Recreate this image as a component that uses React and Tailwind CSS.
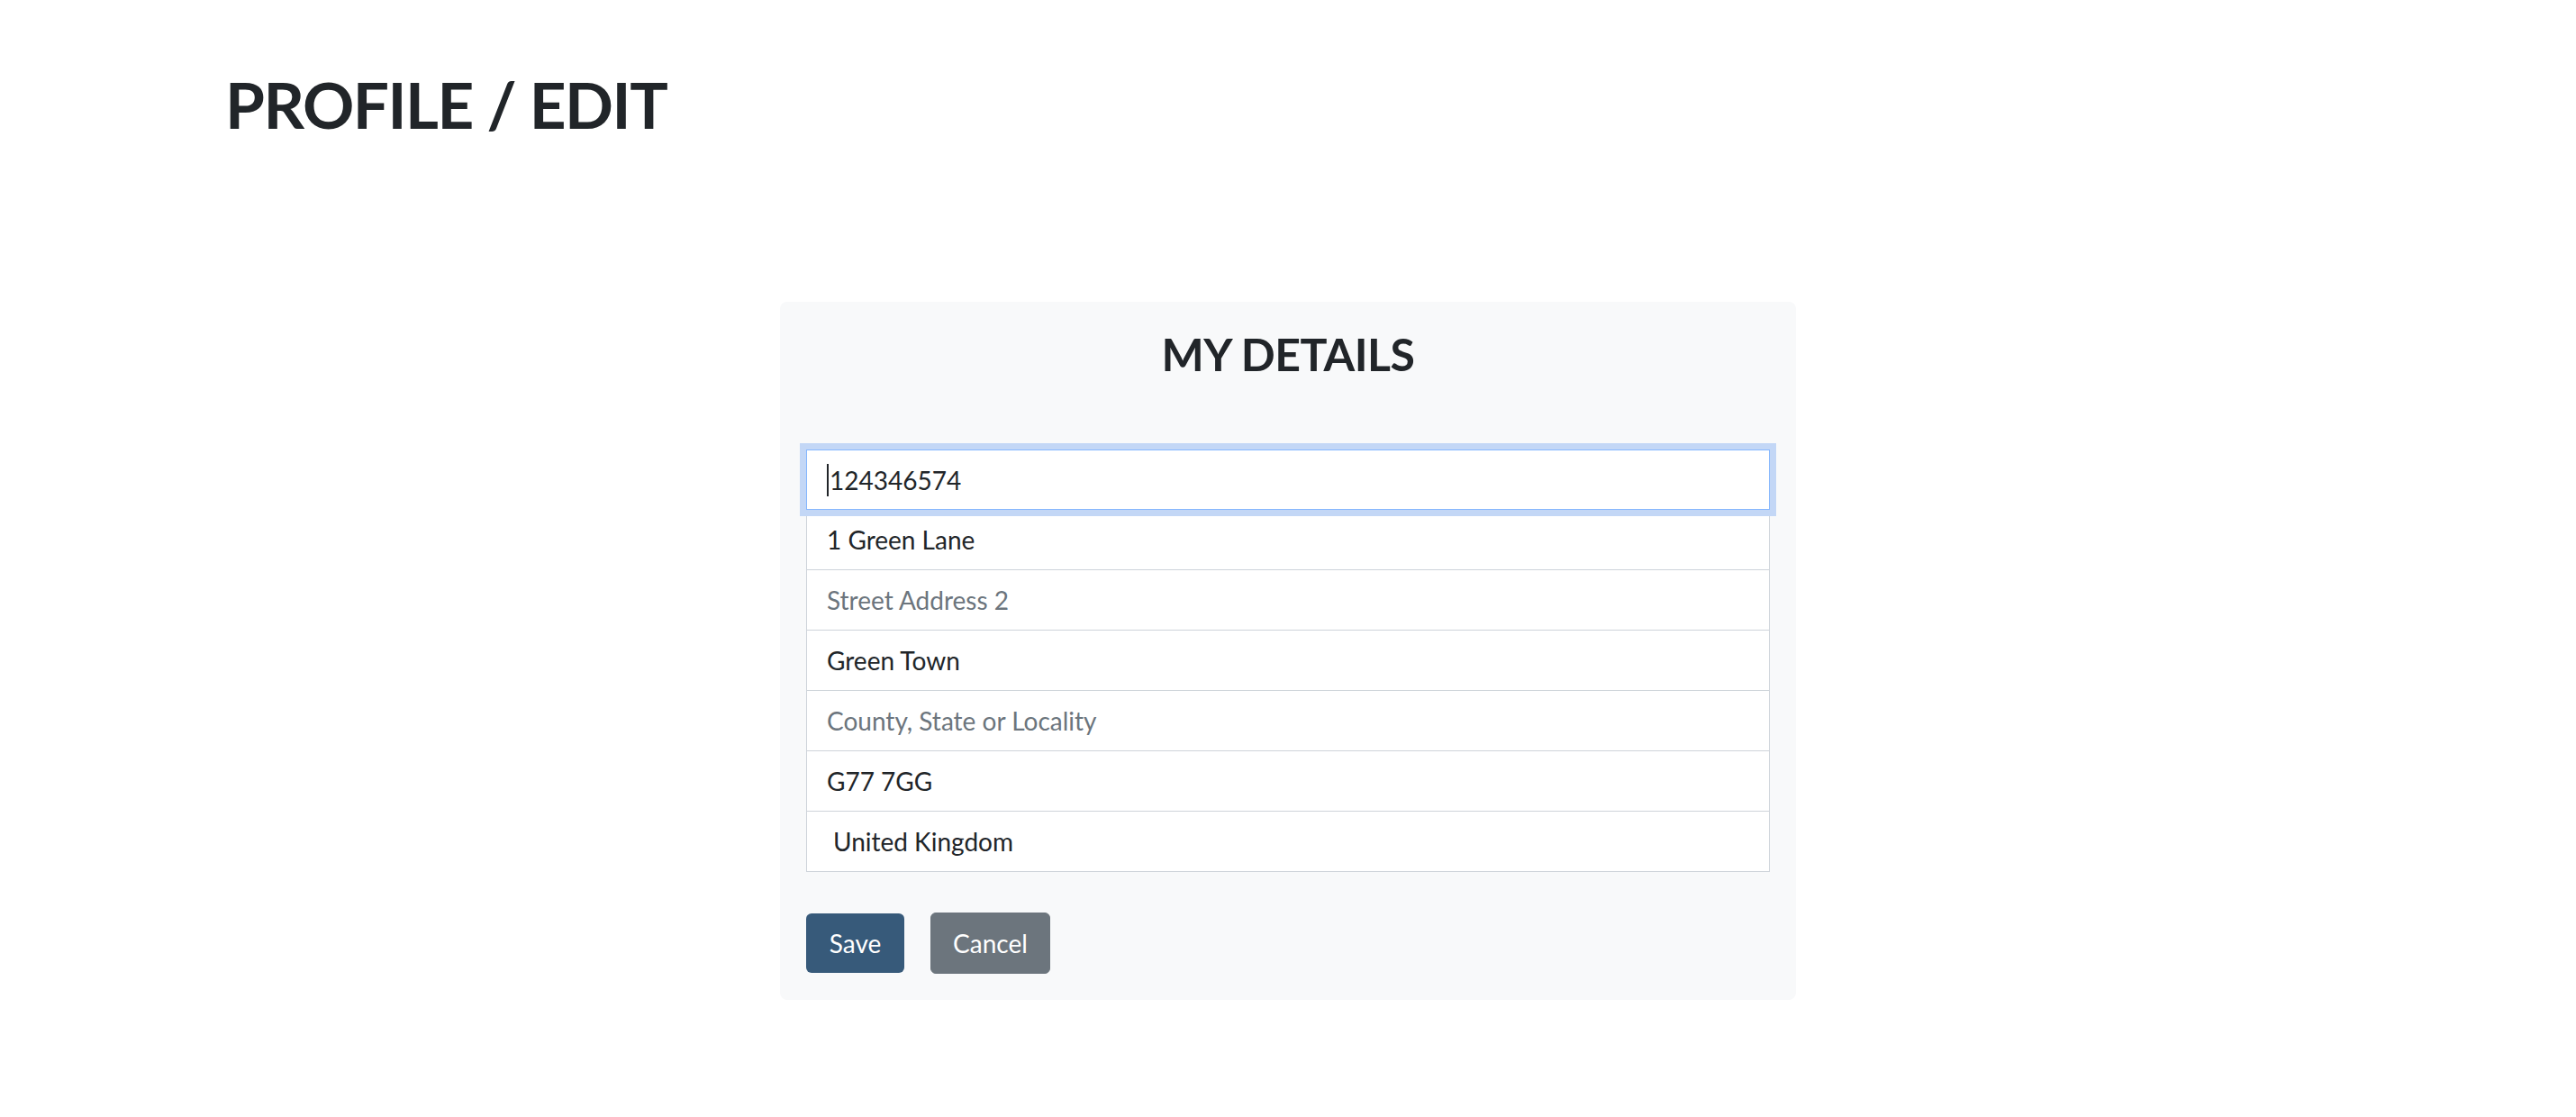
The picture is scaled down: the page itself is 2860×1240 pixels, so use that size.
export default function App() {
  const rows = [
    { value: "1 Green Lane" },
    { placeholder: "Street Address 2" },
    { value: "Green Town" },
    { placeholder: "County, State or Locality" },
    { value: "G77 7GG" },
  ];

  return (
    <div className="min-h-[1240px] bg-white font-['Lato',sans-serif] text-[#212529]">
      {/* Page heading */}
      <div className="pl-[250px] pt-[73px]">
        <h1 className="text-[71px] font-bold leading-[1.2] tracking-[-1.5px]">PROFILE / EDIT</h1>
      </div>

      {/* Details card */}
      <div className="mx-auto mt-[177px] w-[1128px] rounded-[8px] bg-[#f8f9fa] px-[29px] pb-[29px] pt-[28px]">
        <h2 className="text-center text-[50px] font-bold leading-[1.2] tracking-[-0.5px]">MY DETAILS</h2>

        <div className="mt-[76px] flex flex-col">
          {/* focused input */}
          <div className="relative z-10 flex h-[67px] items-center border border-[#86b7fe] bg-white pl-[22px] text-[28px] shadow-[0_0_0_7px_#c3d7f6]">
            <span className="mr-[1px] h-[36px] w-[2px] bg-[#212529]" />
            <span>124346574</span>
          </div>
          {rows.map((r, i) => (
            <input
              key={i}
              readOnly
              value={r.value || ""}
              placeholder={r.placeholder}
              className="-mt-px h-[68px] w-full border border-[#ced4da] bg-white pl-[22px] text-[28px] text-[#212529] outline-none placeholder:text-[#6c757d]"
            />
          ))}
          <div className="-mt-px flex h-[68px] items-center border border-[#ced4da] bg-white pl-[29px] text-[28px]">
            United Kingdom
          </div>
        </div>

        <div className="mt-[45px] flex items-center gap-[29px]">
          <button className="h-[66px] w-[109px] rounded-[6px] bg-[#375a7a] text-[28px] text-white">Save</button>
          <button className="h-[68px] w-[133px] rounded-[6px] border border-[#6c757d] bg-[#6c757d] text-[28px] text-white">
            Cancel
          </button>
        </div>
      </div>
    </div>
  );
}
